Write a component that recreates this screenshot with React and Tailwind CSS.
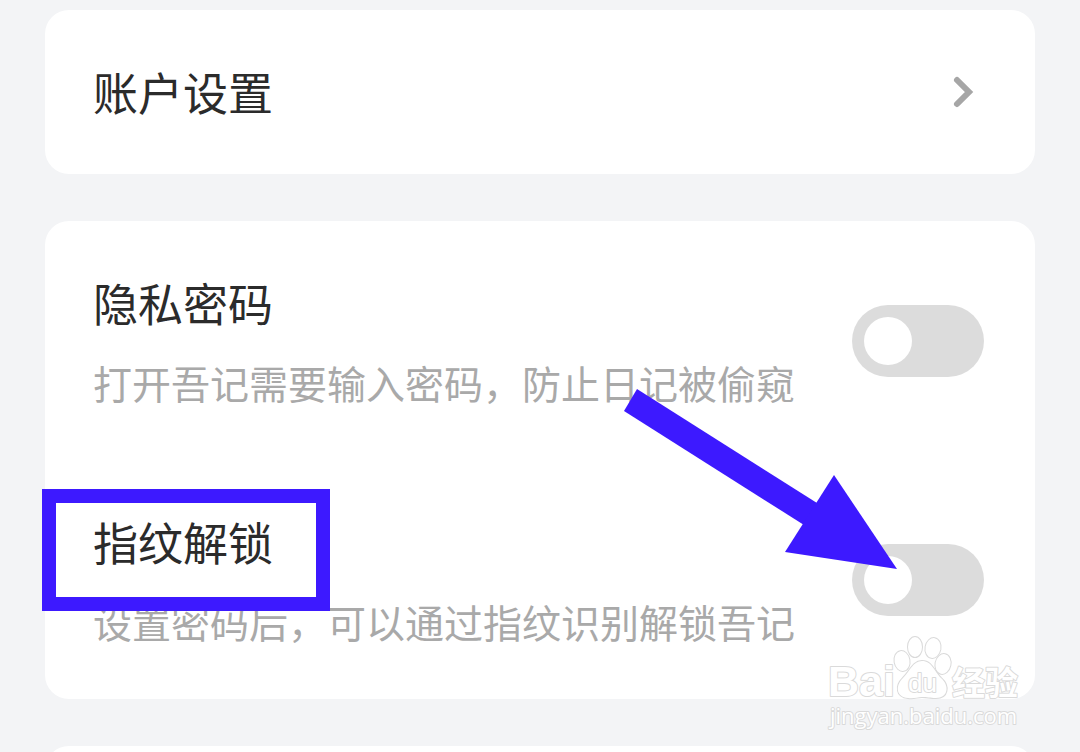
import { useState } from 'react';

// 设置卡片
function Card({ className = '', children }) {
  return <section className={`rounded-3xl bg-white ${className}`}>{children}</section>;
}

// 跳转行
function LinkRow({ title, href }) {
  return (
    <a href={href} className="flex items-center justify-between px-12 py-12">
      <span className="text-[45px] leading-[68px] text-[#2b2b2b]">{title}</span>
      <svg
        className="mr-3 h-9 w-6"
        viewBox="0 0 24 36"
        fill="none"
        stroke="#a6a6a6"
        strokeWidth="6"
        strokeLinecap="round"
        aria-hidden="true"
      >
        <path d="M6 6 L18 18 L6 30" />
      </svg>
    </a>
  );
}

// 开关
function Switch({ id, checked, onChange }) {
  return (
    <span className="relative mr-[3px] flex shrink-0">
      <input
        id={id}
        type="checkbox"
        role="switch"
        checked={checked}
        onChange={(e) => onChange(e.target.checked)}
        className="peer h-[72px] w-[132px] cursor-pointer appearance-none rounded-full bg-[#dcdcdc] checked:bg-blue-500"
      />
      <span className="pointer-events-none absolute top-3 left-3 size-12 rounded-full bg-white peer-checked:left-[72px]" />
    </span>
  );
}

// 开关行
function SwitchRow({ id, title, description, highlighted = false }) {
  const [on, setOn] = useState(false);

  return (
    <div className="flex items-center justify-between px-12 py-12">
      <div className="flex flex-col items-start gap-4">
        <label htmlFor={id} className="relative text-[45px] leading-[68px] text-[#2b2b2b]">
          {title}
          {highlighted && (
            <span className="pointer-events-none absolute -top-[19px] -right-[57px] -bottom-[35px] -left-[51px] z-10 border-[14px] border-[#3d19ff]" />
          )}
        </label>
        <p className="text-[39px] leading-[59px] text-[#a9a9a9]">{description}</p>
      </div>
      <Switch id={id} checked={on} onChange={setOn} />
    </div>
  );
}

// 指向开关的箭头
function Arrow() {
  return (
    <svg
      className="pointer-events-none absolute top-[168px] right-[138px] h-[181px] w-[273px]"
      viewBox="0 0 273 181"
      fill="#3d19ff"
      aria-hidden="true"
    >
      <path d="M13 0 L193 114 L180 136 L0 22 Z" />
      <path d="M210 86 L273 180 L161 163 Z" />
    </svg>
  );
}

// 水印
function Watermark() {
  return (
    <svg
      className="pointer-events-none absolute right-[54px] bottom-5 h-[100px] w-[200px]"
      viewBox="0 0 200 100"
      fill="#ffffff"
      stroke="#dadada"
      strokeWidth="2"
      strokeLinejoin="round"
      paintOrder="stroke"
      fontFamily="'Liberation Sans', 'Noto Sans CJK SC', sans-serif"
    >
      <text x="2" y="64" fontSize="43" fontWeight="700">Bai</text>
      <g>
        <ellipse cx="76" cy="29" rx="7.5" ry="10" transform="rotate(-10 76 29)" />
        <ellipse cx="89" cy="15" rx="7" ry="10" />
        <ellipse cx="107" cy="16" rx="7.5" ry="10" transform="rotate(10 107 16)" />
        <ellipse cx="117" cy="32" rx="7.5" ry="10" transform="rotate(12 117 32)" />
        <path d="M96 29 C106 29 108 39 115 46 C124 54 122 66 110 66 C104 66 101 65 96 65 C91 65 88 67 82 66 C70 65 69 54 77 46 C84 39 87 29 96 29 Z" />
      </g>
      <text x="82" y="60" fontSize="26">du</text>
      <text x="126" y="63" fontSize="33" fontWeight="700">经验</text>
      <text x="4" y="92" fontSize="22" fontFamily="'Open Sans', sans-serif">jingyan.baidu.com</text>
    </svg>
  );
}

export default function App() {
  return (
    <main className="relative flex h-screen flex-col gap-[47px] overflow-hidden bg-[#f3f4f6] px-[45px] pt-[10px] font-['Noto_Sans_CJK_SC',sans-serif]">
      <Card className="shrink-0">
        <LinkRow title="账户设置" href="#account" />
      </Card>

      <Card className="relative shrink-0">
        <SwitchRow
          id="privacy-password"
          title="隐私密码"
          description="打开吾记需要输入密码，防止日记被偷窥"
        />
        <SwitchRow
          id="fingerprint-unlock"
          title="指纹解锁"
          description="设置密码后，可以通过指纹识别解锁吾记"
          highlighted
        />
        <Arrow />
      </Card>

      <Card className="h-24 shrink-0" />

      <Watermark />
    </main>
  );
}
